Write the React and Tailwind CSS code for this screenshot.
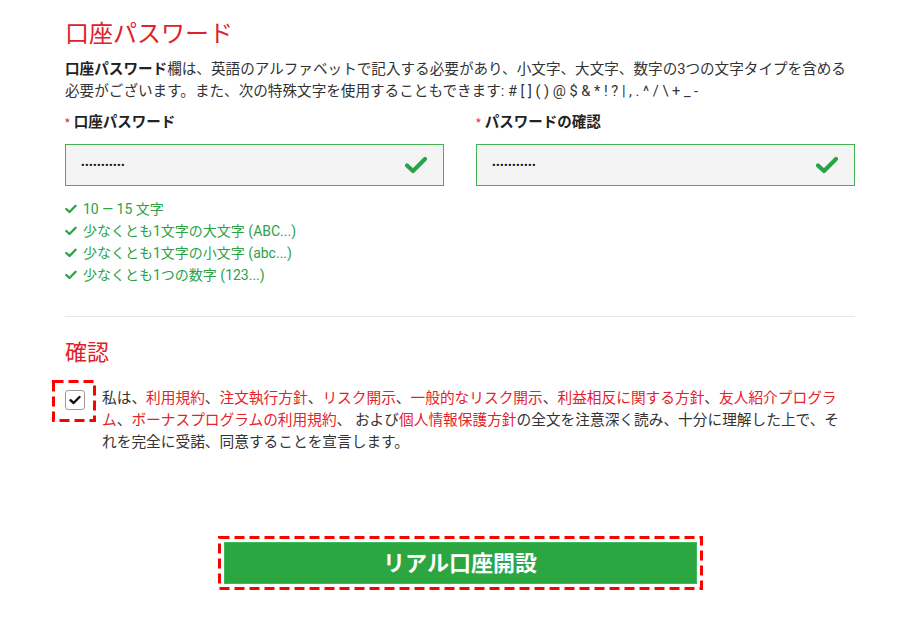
import React from "react";

const FONT = { fontFamily: "Roboto, 'Noto Sans CJK JP', sans-serif" };

function BigCheck() {
  return (
    <svg width="22" height="18" viewBox="0 0 22 18" className="shrink-0">
      <path d="M2 9.5 L8 15 L20 3" fill="none" stroke="#2ba245" strokeWidth="4.2" strokeLinecap="round" strokeLinejoin="round" />
    </svg>
  );
}

function SmallCheck() {
  return (
    <svg width="12" height="10" viewBox="0 0 12 10" className="shrink-0">
      <path d="M1.3 5 L4.5 8 L10.6 1.8" fill="none" stroke="#2ba245" strokeWidth="2.3" strokeLinecap="round" strokeLinejoin="round" />
    </svg>
  );
}

function DashedFrame({ w, h }) {
  return (
    <svg width={w} height={h} className="absolute inset-0 pointer-events-none" viewBox={`0 0 ${w} ${h}`}>
      <rect x="1.5" y="1.5" width={w - 3} height={h - 3} fill="none" stroke="#ff0000" strokeWidth="3" strokeDasharray="10 5" />
    </svg>
  );
}

function PwField({ label }) {
  return (
    <div className="flex-1 flex flex-col">
      <div className="h-[22px] leading-[22px] text-[14.5px] font-bold text-[#222] flex items-center">
        <span className="text-[#e0252b] text-[11px] mr-[4px] font-normal">*</span>
        {label}
      </div>
      <div className="mt-[10px] h-[42px] border border-[#43b254] bg-[#f4f4f4] flex items-center pl-[15px] pr-[16px]">
        <span className="flex-1 text-[#111] text-[11px] tracking-[0.3px] leading-none">•••••••••••</span>
        <BigCheck />
      </div>
    </div>
  );
}

const R = ({ children }) => <span className="text-[#e3232b]">{children}</span>;

export default function App() {
  return (
    <div className="w-[900px] h-[618px] bg-white overflow-hidden" style={FONT}>
      <div className="ml-[65px] w-[790px] pt-[18px]">
        <h1 className="text-[24px] leading-[32px] text-[#e0202a] font-normal">口座パスワード</h1>
        <p className="mt-[8px] text-[14.6px] leading-[22px] text-[#333]">
          <span className="font-bold text-[#222]">口座パスワード</span>欄は、英語のアルファベットで記入する必要があり、小文字、大文字、数字の3つの文字タイプを含める必要がございます。また、次の特殊文字を使用することもできます: # [ ] ( ) @ $ &amp; * ! ? | , . ^ / \ + _ -
        </p>
        <div className="mt-[10px] flex gap-[32px]">
          <PwField label="口座パスワード" />
          <PwField label="パスワードの確認" />
        </div>
        <ul className="mt-[12px] text-[14px] leading-[22px] text-[#2ba245]">
          {["10 — 15 文字", "少なくとも1文字の大文字 (ABC...)", "少なくとも1文字の小文字 (abc...)", "少なくとも1つの数字 (123...)"].map((t) => (
            <li key={t} className="flex items-center gap-[6px]">
              <SmallCheck />
              <span>{t}</span>
            </li>
          ))}
        </ul>
        <div className="mt-[30px] h-px bg-[#e6e6e6]" />
        <h2 className="mt-[21px] text-[22px] leading-[30px] text-[#e0202a] font-normal">確認</h2>
        <div className="mt-[19px] flex items-start">
          <div className="relative mt-[3px] w-[20px] h-[20px] shrink-0">
            <div className="absolute left-[-13px] top-[-10px] w-[44px] h-[42px]">
              <DashedFrame w={44} h={42} />
            </div>
            <div className="w-[20px] h-[20px] rounded-[3px] border border-[#9a9a9a] bg-white flex items-center justify-center">
              <svg width="12" height="10" viewBox="0 0 12 10">
                <path d="M1.5 5.2 L4.6 8 L10.5 2" fill="none" stroke="#111" strokeWidth="2.4" strokeLinecap="round" strokeLinejoin="round" />
              </svg>
            </div>
          </div>
          <p className="ml-[17px] w-[742px] text-[14.7px] leading-[22px] text-[#333]">
            私は、<R>利用規約</R>、<R>注文執行方針</R>、<R>リスク開示</R>、<R>一般的なリスク開示</R>、<R>利益相反に関する方針</R>、<R>友人紹介プログラム</R>、<R>ボーナスプログラムの利用規約</R>、 および<R>個人情報保護方針</R>の全文を注意深く読み、十分に理解した上で、それを完全に受諾、同意することを宣言します。
          </p>
        </div>
        <div className="mt-[83px] flex justify-center">
          <div className="relative p-[6px]">
            <DashedFrame w={485} h={54} />
            <button className="w-[473px] h-[42px] bg-[#2ba641] border border-[#3fbb56] text-white text-[22px] font-bold flex items-center justify-center">
              リアル口座開設
            </button>
          </div>
        </div>
      </div>
    </div>
  );
}
